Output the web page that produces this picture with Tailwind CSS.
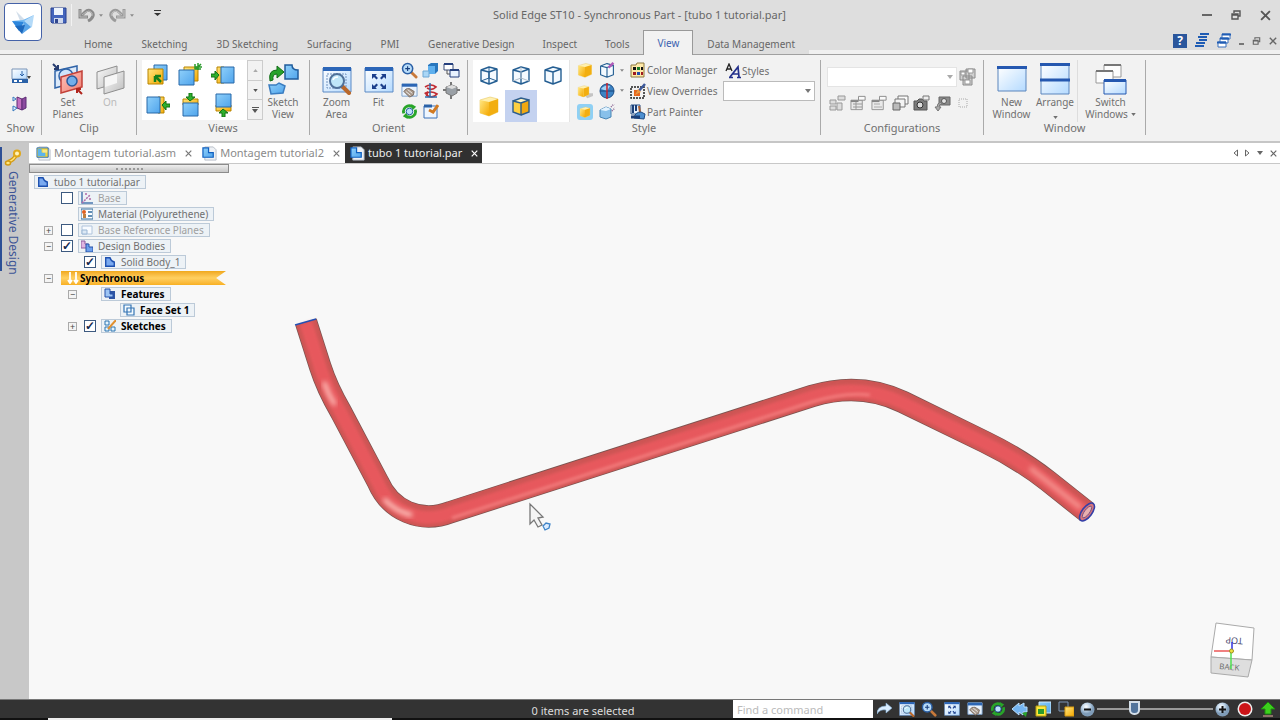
<!DOCTYPE html>
<html lang="en">
<head>
    <meta charset="UTF-8">
    <meta name="viewport" content="width=device-width, initial-scale=1.0">
    <title>Solid Edge ST10 - Synchronous Part - [tubo 1 tutorial.par]</title>
    <script src="https://cdn.jsdelivr.net/npm/@tailwindcss/browser@4"></script>
</head>
<body class="min-h-screen flex flex-col bg-[#f8f8f8] font-['Noto_Sans','Open_Sans',sans-serif] text-[11px] leading-3 text-[#707070] overflow-hidden">

    <!-- shared icons -->
    <svg class="absolute size-0" xmlns="http://www.w3.org/2000/svg">
        <defs>
            <linearGradient id="gBlue" x1="0" y1="0" x2="1" y2="1"><stop offset="0" stop-color="#8fd0fa"/><stop offset="1" stop-color="#4fa4ec"/></linearGradient>
            <linearGradient id="gWin" x1="0" y1="0" x2="1" y2="1"><stop offset="0" stop-color="#ffffff"/><stop offset="1" stop-color="#b4daff"/></linearGradient>
            <linearGradient id="gGold" x1="0" y1="0" x2="1" y2="1"><stop offset="0" stop-color="#ffe680"/><stop offset="1" stop-color="#f5a800"/></linearGradient>
            <linearGradient id="gRed" x1="0" y1="0" x2="1" y2="1"><stop offset="0" stop-color="#ffc4bc"/><stop offset="1" stop-color="#f08074"/></linearGradient>
            <linearGradient id="gGray" x1="0" y1="0" x2="1" y2="1"><stop offset="0" stop-color="#fafafa"/><stop offset="1" stop-color="#bdbdbd"/></linearGradient>
            <radialGradient id="gBall" cx=".4" cy=".3"><stop offset="0" stop-color="#fff"/><stop offset=".5" stop-color="#c4d8ea"/><stop offset="1" stop-color="#7f9cb8"/></radialGradient>
        </defs>
        <symbol id="part" viewBox="0 0 16 16"><path d="M3 1h9l3 3v11H3z" fill="#eef1f5" stroke="#b5bcc6"/><path d="M1 2h6v5h5v5H1z" fill="url(#gBlue)" stroke="#1060c0" stroke-width="1.3"/></symbol>
        <symbol id="asm" viewBox="0 0 16 16"><path d="M3 1h9l3 3v11H3z" fill="#eef1f5" stroke="#b5bcc6"/><path d="M1 2h12v10H1z" fill="#f2d43a" stroke="#2a6cb4"/><path d="M2 3h4v4h4v4H2z" fill="#5cb4ec"/><path d="M7 4h5v3H7z" fill="#f8e88a"/></symbol>
        <symbol id="body" viewBox="0 0 14 14"><path d="M2 2h5q1 4 5 5v5H2z" fill="#7aaaf0" stroke="#1c50b0" stroke-width="1.6"/></symbol>
        <symbol id="wirecube" viewBox="0 0 20 20"><path d="M2 5v11l8 3 8-3V4l-8-2z" fill="#f4faff"/><path d="M2 5v11l8 3V7zM10 7l8-3v12l-8 3M2 5l8-3 8 2" fill="none" stroke="#245e92" stroke-width="1.4" stroke-linejoin="round"/></symbol>
        <symbol id="goldcube" viewBox="0 0 22 22"><path d="m2 5 10-3 8 2v13l-9 4-9-3z" fill="#fff0b0" stroke="#e8c860" stroke-width=".6"/><path d="m2 5 9 2v14l-9-3z" fill="url(#gGold)"/><path d="m11 7 9-3v13l-9 4z" fill="#f2ae10"/></symbol>
        <symbol id="lens" viewBox="0 0 18 18"><path d="m10 10 6 6" stroke="#c8793a" stroke-width="3" stroke-linecap="round"/><circle cx="7" cy="7" r="5.4" fill="#b7dbf8" stroke="#2a5fa5" stroke-width="1.6"/><path d="M4.500 7h5M7 4.500v5" stroke="#163d7c" stroke-width="1.200"/></symbol>
        <symbol id="handwin" viewBox="0 0 18 16"><path d="M1 1h16v13H1z" fill="#eaf3fd" stroke="#7aa0cc"/><path d="M1 1h16v3H1z" fill="#2c66b4"/><path d="M3 9q2-4 6-3l5 3-1 4-4 2-2-2z" fill="#a8988a" stroke="#6b5c50" stroke-width=".8"/><path d="m5 9 5 4M7 7l5 4" stroke="#eee"/></symbol>
        <symbol id="fit" viewBox="0 0 30 30"><path d="M1 3h28v24H1z" fill="url(#gWin)" stroke="#5b89c4"/><path d="M1 2h28v4H1z" fill="#2c66b8"/><path d="M8 9h5l-1.500 1.500 2.500 2.500-1.500 1.500-2.500-2.500L8 14zM22 9h-5l1.500 1.500-2.500 2.500 1.500 1.500 2.500-2.500L22 14zM8 24h5l-1.500-1.500 2.500-2.500-1.500-1.500-2.500 2.500L8 19zM22 24h-5l1.500-1.500-2.500-2.500 1.500-1.500 2.500 2.500L22 19z" fill="#1b3f8c"/></symbol>
        <symbol id="zoomarea" viewBox="0 0 30 30"><path d="M1 3h28v24H1z" fill="url(#gWin)" stroke="#5b89c4"/><path d="M1 2h28v4H1z" fill="#2c66b8"/><path d="M5 9h19v14H5z" fill="none" stroke="#7393be" stroke-dasharray="2 1"/><path d="m20 21 7 7" stroke="#b9682c" stroke-width="4" stroke-linecap="round"/><circle cx="15" cy="16" r="7" fill="#bfe6f8" stroke="#50719a" stroke-width="2"/><path d="M11 15q1-3 5-3" fill="none" stroke="#fff" stroke-width="1.500"/></symbol>
        <symbol id="rotate" viewBox="0 0 18 18"><path d="M3 11A6 6 0 0 1 12 4" fill="none" stroke="#28a52a" stroke-width="3"/><path d="m11 1 5 3-4 4z" fill="#28a52a"/><path d="M15 7a6 6 0 0 1-9 7" fill="none" stroke="#28a52a" stroke-width="3"/><path d="m7 17-5-3 4-4z" fill="#28a52a"/><circle cx="9" cy="9" r="3.500" fill="#bfe0fa" stroke="#1d5c9c"/></symbol>
        <symbol id="cfg" viewBox="0 0 18 16"><path d="M1 5h12v10H1z" fill="#e9e9e9" stroke="#949494"/><path d="M9 1h7v4H9z" fill="#fafafa" stroke="#8a8a8a"/><path d="M1 6h8" stroke="#858585" stroke-width="2"/></symbol>
        <symbol id="restore" viewBox="0 0 10 10"><path d="M3 3V1h6v5H7" fill="none" stroke="currentColor" stroke-width="1.400"/><path d="M1 4h6v5H1zM1 5h6" fill="none" stroke="currentColor" stroke-width="1.400"/></symbol>
        <symbol id="close" viewBox="0 0 10 10"><path d="m1 1 8 8M9 1 1 9" fill="none" stroke="currentColor" stroke-width="1.700"/></symbol>
        <symbol id="down" viewBox="0 0 6 4"><path d="M0 0h6L3 4z" fill="currentColor"/></symbol>
    </svg>

    <!-- title bar + ribbon tabs -->
    <header class="flex h-[55px] shrink-0 bg-[#dedede] border-b border-[#a0a0a0]">
        <div class="w-[45px] shrink-0 flex flex-col justify-between">
            <button aria-label="Application menu" class="ml-1 mt-[3px] size-[38px] rounded-[4px] border border-[#4562a8] bg-white flex items-center justify-center">
                <svg class="size-[30px]" viewBox="0 0 30 30"><path d="m8 4 9 9-4 3z" fill="#d2deea"/><path d="m4 14 11-1 11-5-9 10z" fill="#72b8f2"/><path d="m4 14 12 1-5 9z" fill="#2d86dc"/><path d="m16 14 10-6-2 12-10 6z" fill="#b4daf8"/><path d="m16 14 7 6-9 7z" fill="#5aa5e8"/><path d="m7 19 7 8 3-9z" fill="#1c68bd"/></svg>
            </button>
            <div class="h-1 bg-[#f0f0f0]"></div>
        </div>
        <div class="flex-1 flex flex-col min-w-0">
            <div class="h-[31px] flex items-center">
                <div class="flex items-center w-[128px] shrink-0 text-[#8c8c8c]">
                    <button aria-label="Save" class="ml-[5px]"><svg class="size-[17px]" viewBox="0 0 17 17"><path d="M1 1h15v15H2l-1-1z" fill="#4465bd" stroke="#2a4390"/><path d="M4 1h9v7H4z" fill="#edf3fc"/><path d="M4 11h9v5H4z" fill="#cfd8ec"/><path d="M5 12h3v4H5z" fill="#30468e"/></svg></button>
                    <span class="w-px h-[22px] bg-[#f2f2f2] ml-1"></span>
                    <button aria-label="Undo" class="ml-[6px]"><svg class="w-[17px] h-4" viewBox="0 0 17 16"><path d="M2 2v8h8" fill="none" stroke="#8a8a8a" stroke-width="3"/><path d="m3 9 4-4q3-3 6-1 3 2 2 5-1 3-5 5" fill="none" stroke="#8a8a8a" stroke-width="3"/><path d="M2 3v7h7M4 8l4-3q3-2 5 0 2 1 1 4" fill="none" stroke="#b8b8b8"/></svg></button>
                    <svg class="w-1 h-[3px] ml-1"><use href="#down"/></svg>
                    <button aria-label="Redo" class="ml-[6px]"><svg class="w-[17px] h-4" viewBox="0 0 17 16"><path d="M15 2v8H7" fill="none" stroke="#9a9a9a" stroke-width="3"/><path d="m14 9-4-4Q7 2 4 4 1 6 2 9q1 3 5 5" fill="none" stroke="#9a9a9a" stroke-width="3"/><path d="M15 3v7H8M13 8 9 5Q6 3 4 5 2 6 3 9" fill="none" stroke="#c4c4c4"/></svg></button>
                    <svg class="w-1 h-[3px] ml-1"><use href="#down"/></svg>
                    <button aria-label="Customize" class="ml-5 mb-1 text-[#333]"><svg class="w-[7px] h-[6px]" viewBox="0 0 7 6"><path d="M0 0h7v1H0zM0 3h7L3.500 6z" fill="currentColor"/></svg></button>
                </div>
                <h1 class="flex-1 text-center pl-5 pr-[116px] pr-[114px] text-[11px] text-[#666]">Solid Edge ST10 - Synchronous Part - [tubo 1 tutorial.par]</h1>
                <div class="w-[78px] flex justify-between items-center pr-[9px] text-[#555]">
                    <button aria-label="Minimize" class="w-[10px] h-[2px] bg-[#666]"></button>
                    <button aria-label="Restore"><svg class="size-[10px]"><use href="#restore"/></svg></button>
                    <button aria-label="Close"><svg class="size-[11px]"><use href="#close"/></svg></button>
                </div>
            </div>
            <div class="h-6 flex">
                <div class="w-[25px] h-1 self-end bg-[#f0f0f0] shrink-0"></div>
                <nav class="flex items-stretch text-[10px] text-[#666] whitespace-nowrap">
                    <button class="pt-[3px] pl-[14px] pr-[15px]">Home</button>
                    <button class="pt-[3px] pl-[14px] pr-[15px]">Sketching</button>
                    <button class="pt-[3px] pl-[14px] pr-[15px]">3D Sketching</button>
                    <button class="pt-[3px] pl-[14px] pr-[15px]">Surfacing</button>
                    <button class="pt-[3px] pl-[14px] pr-[15px]">PMI</button>
                    <button class="pt-[3px] px-[14px]">Generative Design</button>
                    <button class="pt-[3px] px-[14px]">Inspect</button>
                    <button class="pt-[3px] px-[14px]">Tools</button>
                    <button class="px-[13px] -mb-px bg-[#f2f2f2] border border-b-0 border-[#999] text-[#3c62b0]">View</button>
                    <button class="pt-[3px] px-[14px]">Data Management</button>
                </nav>
                <div class="flex-1 flex flex-col justify-between">
                    <div class="flex justify-end items-center gap-2 pr-[3px] pt-[3px] text-[#666]">
                        <button aria-label="Help" class="size-[14px] bg-[#2a569c] text-white text-[12px] font-bold">?</button>
                        <button aria-label="Tile windows"><svg class="w-[14px] h-[15px]" viewBox="0 0 14 15"><path d="M5 1h9M3 4h9M4 7h8M1 10h9M0 13h9" stroke="#1f5cb4" stroke-width="2"/></svg></button>
                        <button aria-label="Cascade windows"><svg class="w-[14px] h-[15px]" viewBox="0 0 14 15"><path d="M5 1h8v5H5zM3 5h8v5H3zM1 9h8v5H1z" fill="#fff" stroke="#3b70bd"/><path d="M5 1.500h9M3 5.500h9M0 9.500h9" stroke="#1f5cb4" stroke-width="2"/></svg></button>
                        <button aria-label="Minimize document" class="w-[5px] h-[2px] mt-[6px] bg-[#777]"></button>
                        <button aria-label="Restore document"><svg class="w-[9px] h-2"><use href="#restore"/></svg></button>
                        <button aria-label="Close document"><svg class="size-2"><use href="#close"/></svg></button>
                    </div>
                    <div class="h-1 bg-[#f0f0f0]"></div>
                </div>
            </div>
        </div>
    </header>

    <!-- ribbon -->
    <section class="flex h-[88px] shrink-0 pt-[5px] bg-[#f2f2f2] border-b-2 border-[#c6c6c6] text-[10px] whitespace-nowrap">
        <div class="w-[42px] flex flex-col items-center border-r border-[#aaa] h-[75px]">
            <div class="h-[62px] flex flex-col gap-3 pt-2">
                <button aria-label="Show panes"><svg class="w-5 h-4" viewBox="0 0 20 16"><path d="M1 1h15v10H1z" fill="url(#gWin)" stroke="#7b95b8"/><path d="M1 11h16v4H1z" fill="#2b62a8"/><path d="M3 12h3v2H3zM8 12h3v2H8z" fill="#fff"/><path d="M11 3v5M9 6l2 2 2-2" stroke="#2b62a8" fill="none"/><path d="M16 8h4l-2 3z" fill="#444"/></svg></button>
                <button aria-label="Show planes"><svg class="w-5 h-4" viewBox="0 0 20 16"><path d="m6 1 5 2v11l-5-2z" fill="#c46fc0" stroke="#5c2c74"/><path d="m11 3 4-2v11l-4 2z" fill="#8c4aa0" stroke="#5c2c74"/><path d="m2 1 3 2-3 2zM2 10l4 2-4 3z" fill="#eaf3ff" stroke="#3679bd"/></svg></button>
            </div>
            <span class="text-[11px]">Show</span>
        </div>
        <div class="w-[95px] flex flex-col items-center border-r border-[#aaa] h-[75px]">
            <div class="h-[62px] flex gap-2">
                <button class="w-[34px] flex flex-col items-center">
                    <svg class="size-8 mt-[3px] mb-px shrink-0" viewBox="0 0 32 32"><path d="m3 8 22-5v16L3 25z" fill="#dceafa" stroke="#3064a8" stroke-width="1.500"/><circle cx="14" cy="13" r="7" fill="#cfe4fa" stroke="#3064a8" stroke-width="1.500"/><path d="m9 14 21-6v16L9 30z" fill="url(#gRed)" stroke="#c24038" stroke-width="1.500"/><circle cx="20" cy="18" r="5" fill="#72aeea" stroke="#2a5a9c" stroke-width="1.500"/><path d="m1 1 5 5M6 2v4H2" stroke="#263c70" stroke-width="2" fill="none"/><path d="m30 31-5-5M25 30v-4h4" stroke="#b0241c" stroke-width="2" fill="none"/></svg>
                    Set<br>Planes
                </button>
                <button class="w-[34px] flex flex-col items-center text-[#bbb]">
                    <svg class="size-8 mt-[3px] mb-px shrink-0" viewBox="0 0 32 32"><path d="m3 9 20-6v17L3 26z" fill="url(#gGray)" stroke="#8e8e8e"/><path d="m10 14 20-6v17l-20 6z" fill="url(#gGray)" stroke="#8e8e8e"/><path d="m11 15 12-4v9l-12 4z" fill="#f6f6f6"/></svg>
                    On
                </button>
            </div>
            <span class="text-[11px]">Clip</span>
        </div>
        <div class="w-[173px] flex flex-col items-center border-r border-[#aaa] h-[75px]">
            <div class="h-[62px] w-full flex pl-[5px]">
                <div class="grid grid-cols-3 w-[105px] h-[60px] pr-2 bg-white place-items-center">
                    <button aria-label="Front view"><svg class="size-6" viewBox="0 0 24 24"><path d="M8 2h13v15H8z" fill="url(#gBlue)" stroke="#2868a8"/><path d="M2 6h15v15H2z" fill="url(#gGold)" stroke="#b88400"/><path d="M9 13h6M9 13v6M9 13l6 6" stroke="#14801c" stroke-width="2.500"/></svg></button>
                    <button aria-label="Back view"><svg class="size-6" viewBox="0 0 24 24"><path d="M6 4h14v14H6z" fill="url(#gGold)" stroke="#b88400"/><path d="M1 7h15v15H1z" fill="url(#gBlue)" stroke="#2868a8"/><path d="m23 1-5 5M17 1v5h6M20 0v7M24 4h-7" stroke="#2a9a2c" stroke-width="1.500" fill="none"/></svg></button>
                    <button aria-label="Left view"><svg class="size-6" viewBox="0 0 24 24"><path d="M6 4h7v16H6z" fill="url(#gGold)" stroke="#b88400"/><path d="M10 4h13v16H10z" fill="url(#gBlue)" stroke="#2868a8"/><path d="m8 12-4-4v3H0v3h4v3z" fill="#2eb02c" stroke="#137214"/></svg></button>
                    <button aria-label="Right view"><svg class="size-6" viewBox="0 0 24 24"><path d="M12 4h6v16h-6z" fill="url(#gGold)" stroke="#b88400"/><path d="M1 4h13v16H1z" fill="url(#gBlue)" stroke="#2868a8"/><path d="m16 12 4-4v3h4v3h-4v3z" fill="#2eb02c" stroke="#137214"/></svg></button>
                    <button aria-label="Top view"><svg class="size-6" viewBox="0 0 24 24"><path d="M5 6h15v6H5z" fill="url(#gGold)" stroke="#b88400"/><path d="M5 10h15v13H5z" fill="url(#gBlue)" stroke="#2868a8"/><path d="m12 8-4-4h3V0h3v4h3z" fill="#2eb02c" stroke="#137214"/></svg></button>
                    <button aria-label="Bottom view"><svg class="size-6" viewBox="0 0 24 24"><path d="M5 12h15v6H5z" fill="url(#gGold)" stroke="#b88400"/><path d="M5 1h15v13H5z" fill="url(#gBlue)" stroke="#2868a8"/><path d="m12 16-4 4h3v4h3v-4h3z" fill="#2eb02c" stroke="#137214"/></svg></button>
                </div>
                <div class="flex flex-col w-4 h-[60px] border border-[#ccc] divide-y divide-[#ccc] text-[#555]">
                    <button aria-label="Scroll up" class="flex-1 flex items-center justify-center text-[#aaa]"><svg class="w-[5px] h-[3px] rotate-180"><use href="#down"/></svg></button>
                    <button aria-label="Scroll down" class="flex-1 flex items-center justify-center"><svg class="w-[5px] h-[3px]"><use href="#down"/></svg></button>
                    <button aria-label="More views" class="flex-1 flex flex-col items-center justify-center gap-px"><span class="w-[7px] h-px bg-[#555]"></span><svg class="w-[6px] h-1"><use href="#down"/></svg></button>
                </div>
                <button class="w-10 flex flex-col items-center">
                    <svg class="size-8 mt-[3px] mb-px shrink-0" viewBox="0 0 32 32"><path d="M18 2h7q0 5 6 5v9H18z" fill="url(#gBlue)" stroke="#205c9c" stroke-width="1.500"/><path d="M2 22h7l3-2 6 3-2 7-12 1z" fill="url(#gBlue)" stroke="#3b7dc0" stroke-width="1.500"/><path d="M3 18Q1 7 10 7V3l7 6-7 6v-4q-5 0-4 6z" fill="#27a32b" stroke="#126b18"/></svg>
                    Sketch<br>View
                </button>
            </div>
            <span class="text-[11px]">Views</span>
        </div>
        <div class="w-[158px] flex flex-col items-center border-r border-[#aaa] h-[75px]">
            <div class="h-[62px] flex">
                <button class="w-[42px] flex flex-col items-center"><svg class="size-[30px] mt-[5px] mb-px shrink-0"><use href="#zoomarea"/></svg>Zoom<br>Area</button>
                <button class="w-[42px] flex flex-col items-center"><svg class="size-[30px] mt-[5px] mb-px shrink-0"><use href="#fit"/></svg>Fit</button>
                <div class="grid grid-cols-3 w-[62px] place-items-center">
                    <button aria-label="Zoom"><svg class="size-[17px]"><use href="#lens"/></svg></button>
                    <button aria-label="Zoom tool"><svg class="size-[17px]" viewBox="0 0 17 17"><path d="m6 3 3-2h7v8l-3 3H6z" fill="#2876bd"/><path d="M6 4h7v8H6z" fill="#5fb0ee"/><path d="M1 9h6v6H1z" fill="#a9d6f6" stroke="#6ea7d4"/></svg></button>
                    <button aria-label="Previous view"><svg class="size-[17px]" viewBox="0 0 17 17"><path d="M1 2h9v6H1z" fill="#fff" stroke="#3c4e78"/><path d="M7 8h9v7H7z" fill="#e8f2ff" stroke="#26407e"/><path d="M1 2h9M7 8h9" stroke="#26407e" stroke-width="2"/><path d="M4 8v4h3" fill="none" stroke="#555"/></svg></button>
                    <button aria-label="Pan"><svg class="size-[17px]"><use href="#handwin"/></svg></button>
                    <button aria-label="Spin about"><svg class="size-[17px]" viewBox="0 0 17 17"><path d="M3 5q6-4 11 0-4 4-9 1M3 12q6-4 12 0-4 5-11 1" fill="none" stroke="#c02c34" stroke-width="1.700"/><path d="M8 1v14M3 15h12" stroke="#2f6fae" stroke-width="1.500"/><path d="m2 11 4-2v5z" fill="#c02c34"/></svg></button>
                    <button aria-label="View orientation"><svg class="size-[17px]" viewBox="0 0 17 17"><path d="M8 0v17M0 8h17" stroke="#777" stroke-width="2"/><path d="m3 5 6-2 5 2v6l-5 3-6-3z" fill="#9aa0a6" stroke="#777"/><path d="m3 5 6 2 5-2-5-2z" fill="#ddd"/></svg></button>
                    <button aria-label="Rotate"><svg class="size-[17px]"><use href="#rotate"/></svg></button>
                    <button aria-label="Refresh view"><svg class="size-[17px]" viewBox="0 0 17 17"><path d="M2 3h13v12H2z" fill="#eef6ff" stroke="#3b71b8"/><path d="M2 3h8" stroke="#2b62a8" stroke-width="3"/><path d="m7 7 4 2 5-7" fill="none" stroke="#d17a22" stroke-width="3"/></svg></button>
                </div>
            </div>
            <span class="text-[11px]">Orient</span>
        </div>
        <div class="w-[353px] flex flex-col items-center border-r border-[#aaa] h-[75px]">
            <div class="h-[62px] w-full flex pl-[5px]">
                <div class="grid grid-cols-3 w-[97px] h-[62px] bg-white border-r border-[#e4e4e4]">
                    <button aria-label="Wire frame" class="flex items-center justify-center"><svg class="size-5" viewBox="0 0 20 20"><use href="#wirecube"/><path d="M10 2v11l-8 3M10 13l8 3" fill="none" stroke="#245e92"/></svg></button>
                    <button aria-label="Hidden edges" class="flex items-center justify-center"><svg class="size-5" viewBox="0 0 20 20"><use href="#wirecube"/><path d="M10 2v11l-8 3M10 13l8 3" fill="none" stroke="#b0bdca"/></svg></button>
                    <button aria-label="Visible edges" class="flex items-center justify-center"><svg class="size-5"><use href="#wirecube"/></svg></button>
                    <button aria-label="Shaded" class="flex items-center justify-center"><svg class="size-[22px]"><use href="#goldcube"/></svg></button>
                    <button aria-label="Shaded with edges" class="flex items-center justify-center bg-[#c4d2f0]"><svg class="size-5" viewBox="0 0 20 20"><path d="m2 5 8-3 8 2-8 3z" fill="#fff3c0"/><path d="m2 5 8 2v12l-8-3z" fill="#ffd040"/><path d="m10 7 8-3v12l-8 3z" fill="#f2a810"/><path d="M2 5v11l8 3V7zM10 7l8-3v12l-8 3M2 5l8-3 8 2" fill="none" stroke="#2c5d8c" stroke-width="1.400"/></svg></button>
                </div>
                <div class="grid grid-rows-3 w-[29px] h-[62px] place-items-center">
                    <button aria-label="Drop shadow"><svg class="size-4"><use href="#goldcube"/></svg></button>
                    <button aria-label="Floor shadow"><svg class="size-4" viewBox="0 0 22 22"><path d="M9 14h13v4l-8 3z" fill="#c4c4c4"/><use href="#goldcube" width="18" height="18" y="2"/></svg></button>
                    <button aria-label="Ambient shadow" class="size-4 rounded-[3px] bg-[#8fd0f4] flex items-center justify-center"><svg class="size-3"><use href="#goldcube"/></svg></button>
                </div>
                <div class="grid grid-rows-3 w-[25px] h-[62px] items-center text-[#888]">
                    <div class="flex items-center gap-[5px]"><button aria-label="Edge style"><svg class="size-4" viewBox="0 0 20 20"><use href="#wirecube"/><path d="m12 7 6-6" stroke="#b05ab8" stroke-width="3"/></svg></button><svg class="w-1 h-[3px]"><use href="#down"/></svg></div>
                    <div class="flex items-center gap-[5px]"><button aria-label="Reflection"><svg class="size-4" viewBox="0 0 16 16"><circle cx="8" cy="8" r="7" fill="#3c83c4" stroke="#1d4e86"/><path d="M2 6q4-5 9-3L8 8z" fill="#a5d2f4"/><path d="M1 8h14" stroke="#174478"/><path d="M8 0v16" stroke="#c8202c" stroke-width="1.500"/></svg></button><svg class="w-1 h-[3px]"><use href="#down"/></svg></div>
                    <button aria-label="Perspective"><svg class="size-4" viewBox="0 0 16 16"><path d="m1 6 6-3 5 2v8l-5 2-6-2z" fill="#88c0ea" stroke="#4784b4"/><path d="m1 6 6 1 5-2-5-2z" fill="#e2f3ff"/><path d="m12 3 3-3M13 7l3-3" stroke="#8a6494" stroke-dasharray="1 1" stroke-width="1.500"/></svg></button>
                </div>
                <div class="grid grid-rows-3 h-[62px] items-center w-[99px] pl-[6px]">
                    <button class="flex items-center gap-px"><svg class="size-4" viewBox="0 0 16 16"><path d="M1 3h5l1-2h7v14H1z" fill="#ffe9a8" stroke="#8c7840"/><path d="M3 5h3v3H3z" fill="#111"/><path d="M7 5h3v3H7z" fill="#1a7a28"/><path d="M11 5h2v3h-2z" fill="#111"/><path d="M3 10h3v3H3z" fill="#a01820"/><path d="M7 10h3v3H7z" fill="#204cac"/><path d="M11 10h2v3h-2z" fill="#a01820"/></svg>Color Manager</button>
                    <button class="flex items-center gap-px"><svg class="size-4" viewBox="0 0 16 16"><path d="M1 4h13v11H1z" fill="none" stroke="#222" stroke-dasharray="2 1" stroke-width="1.500"/><path d="M4 7h6v6H4z" fill="#e8671c"/><path d="m7 10 8-9" stroke="#3d5a9c" stroke-width="2.500"/><path d="m5 12 3-6 3 3z" fill="#f2983c"/></svg>View Overrides</button>
                    <button class="flex items-center gap-px"><svg class="size-4" viewBox="0 0 16 16"><path d="M1 1h9v9H1z" fill="#e8f2fc" stroke="#2b5288"/><path d="M3 1v8M6 1v6" stroke="#1b3f78" stroke-width="2"/><path d="m9 2 1 6" stroke="#ad6030" stroke-width="2"/><path d="M4 14q1-6 7-6l4 2-1 5z" fill="#4d8fd0" stroke="#1e4c84"/><path d="M1 13h9" stroke="#1b3f78" stroke-width="3"/></svg>Part Painter</button>
                </div>
                <div class="flex flex-col gap-px w-[92px] pt-[2px]">
                    <button class="flex items-center gap-px h-[18px] pl-[2px]"><svg class="size-4 shrink-0" viewBox="0 0 16 16"><path d="M1 8 4 1l3 7M2 6h4" fill="none" stroke="#222" stroke-width="1.300"/><path d="M5 14 13 4l1 10M8 11h6M4 14.500h4M12 14.500h4" fill="none" stroke="#23308c" stroke-width="1.700"/></svg>Styles</button>
                    <div class="relative">
                        <select aria-label="Style override" class="block appearance-none w-full h-5 bg-white border border-[#bbb] outline-none"><option></option></select>
                        <svg class="absolute right-1 top-2 w-[6px] h-1 text-[#777] pointer-events-none"><use href="#down"/></svg>
                    </div>
                </div>
            </div>
            <span class="text-[11px]">Style</span>
        </div>
        <div class="w-[163px] flex flex-col items-center border-r border-[#aaa] h-[75px]">
            <div class="h-[62px] w-full flex flex-col pl-[6px] pt-[7px] gap-2">
                <div class="flex items-center gap-[2px]">
                    <div class="relative w-[130px]">
                        <select aria-label="Configuration" disabled class="block appearance-none w-full h-5 bg-white border border-[#e4e4e4] outline-none"><option></option></select>
                        <svg class="absolute right-1 top-2 w-[6px] h-1 text-[#aaa] pointer-events-none"><use href="#down"/></svg>
                    </div>
                    <button aria-label="Save configuration"><svg class="w-[17px] h-[18px]" viewBox="0 0 17 18"><path d="M1 3h9v9H1zM7 1h9v9H7zM4 8h9v9H4z" fill="#d0d0d0" stroke="#8a8a8a"/><path d="M9 1h5v4H9zM2 4h4v3H2zM6 12h5v4H6z" fill="#fff" stroke="#999"/></svg></button>
                </div>
                <div class="flex items-center gap-[4px] pl-[2px]">
                    <svg class="w-[17px] h-4" viewBox="0 0 17 16"><path d="M1 5h6v4H1zM1 11h6v4H1zM8 8h5v7H8zM9 1h7v4H9z" fill="#ddd" stroke="#999"/></svg>
                    <svg class="w-[17px] h-4" viewBox="0 0 17 16"><use href="#cfg"/><path d="M3 9h9M3 12h9M6 7v8" stroke="#999"/></svg>
                    <svg class="w-[17px] h-4" viewBox="0 0 17 16"><use href="#cfg"/><path d="M3 9h6M3 12h8" stroke="#aaa"/></svg>
                    <svg class="w-[17px] h-4" viewBox="0 0 17 16"><path d="M6 1h10v8H6z" fill="#fafafa" stroke="#777"/><path d="M3 4h10v8H3z" fill="#f4f4f4" stroke="#777"/><path d="M1 8h7v7H1z" fill="#bbb" stroke="#666"/></svg>
                    <svg class="w-[17px] h-4" viewBox="0 0 17 16"><path d="M1 6h3l2-2h3l2 2h3v9H1z" fill="#7c7c7c" stroke="#555"/><circle cx="7" cy="10" r="3" fill="#ddd" stroke="#333"/><path d="M10 1h6v4h-6z" fill="#eee" stroke="#777"/></svg>
                    <svg class="w-[17px] h-4" viewBox="0 0 17 16"><path d="M5 2h11v8H5z" fill="#8b8b8b" stroke="#666"/><circle cx="10" cy="6" r="2.500" fill="#e4e4e4" stroke="#555"/><path d="M8 9q-3 0-3 3h2l-3 4-3-4h2q0-4 4-5z" fill="#aaa" stroke="#777"/></svg>
                    <svg class="w-[17px] h-4" viewBox="0 0 17 16"><path d="M4 4h8v8H4z" fill="none" stroke="#aaa" stroke-dasharray="1 1"/></svg>
                </div>
            </div>
            <span class="text-[11px]">Configurations</span>
        </div>
        <div class="w-[162px] flex flex-col items-center border-r border-[#aaa] h-[75px]">
            <div class="h-[62px] w-full flex pl-[6px]">
                <button class="w-[43px] flex flex-col items-center"><svg class="w-[30px] h-8 mt-[3px] mb-px shrink-0" viewBox="0 0 30 32"><path d="M1 4h28v24H1z" fill="url(#gWin)" stroke="#5b85bc"/><path d="M0 4.500h30" stroke="#2558b0" stroke-width="3"/></svg>New<br>Window</button>
                <button class="w-[45px] flex flex-col items-center border-r border-[#ddd]"><svg class="w-[30px] h-8 mt-[3px] mb-px shrink-0" viewBox="0 0 30 32"><path d="M1 1h28v30H1z" fill="url(#gWin)" stroke="#5b85bc"/><path d="M0 1.500h30M0 17h30" stroke="#2558b0" stroke-width="3"/></svg>Arrange<svg class="w-[5px] h-[3px] mt-2"><use href="#down"/></svg></button>
                <button class="w-[65px] flex flex-col items-center"><svg class="w-8 h-8 mt-[3px] mb-px shrink-0" viewBox="0 0 32 32"><path d="M9 2h17v12H9z" fill="#fdfdfd" stroke="#999"/><path d="M9 2h17" stroke="#777" stroke-width="2"/><path d="M1 8h17v12H1z" fill="#fdfdfd" stroke="#999"/><path d="M1 8h17" stroke="#777" stroke-width="2"/><path d="M9 17h22v14H9z" fill="url(#gWin)" stroke="#2558b0"/><path d="M9 17.500h22" stroke="#2558b0" stroke-width="3"/></svg>Switch<span class="flex items-center gap-[3px]">Windows <svg class="w-[5px] h-[3px]"><use href="#down"/></svg></span></button>
            </div>
            <span class="text-[11px]">Window</span>
        </div>
    </section>

    <div class="flex flex-1 min-h-0">
        <!-- docked pane tab -->
        <aside class="w-[29px] shrink-0 bg-[#c8c8c8] pt-1">
            <button class="h-[124px] w-6 flex flex-col items-center gap-1 pt-[2px] border-l-2 border-[#2d4f96] text-[12px] leading-6 text-[#3c5496]">
                <svg class="size-[18px] shrink-0" viewBox="0 0 18 18"><path d="M4 13q6-2 8-7" fill="none" stroke="#d39a12" stroke-width="4"/><path d="M4 13q6-2 8-7" fill="none" stroke="#ffe27a" stroke-width="1.500"/><circle cx="13" cy="4.500" r="3" fill="#fff2b8" stroke="#e0a81a" stroke-width="2"/><ellipse cx="4" cy="14" rx="2.500" ry="2" fill="#ffe680" stroke="#d39a12" stroke-width="1.500"/></svg>
                <span class="[writing-mode:vertical-rl] whitespace-nowrap">Generative Design</span>
            </button>
        </aside>

        <div class="flex-1 flex flex-col min-w-0">
            <!-- document tabs -->
            <div class="h-[21px] shrink-0 flex items-stretch bg-white border-b border-[#c8c8c8] text-[11px] text-[#8a8a8a] whitespace-nowrap">
                <div class="flex items-center gap-[3px] pl-[7px]"><svg class="size-[15px]"><use href="#asm"/></svg><a href="#">Montagem tutorial.asm</a><button aria-label="Close tab" class="ml-[6px] text-[#777]"><svg class="size-[7px]"><use href="#close"/></svg></button></div>
                <div class="flex items-center gap-[3px] pl-[10px]"><svg class="size-[15px]"><use href="#part"/></svg><a href="#">Montagem tutorial2</a><button aria-label="Close tab" class="ml-[6px] text-[#777]"><svg class="size-[7px]"><use href="#close"/></svg></button></div>
                <div class="flex items-center gap-[3px] pl-[5px] pr-1 ml-[5px] bg-[#303030] text-[#eee]"><svg class="size-[15px]"><use href="#part"/></svg><a href="#">tubo 1 tutorial.par</a><button aria-label="Close tab" class="ml-[6px] text-white"><svg class="size-[7px]"><use href="#close"/></svg></button></div>
                <div class="ml-auto flex items-center gap-[7px] pr-[3px] text-[#666]">
                    <button aria-label="Previous tab"><svg class="w-[5px] h-2" viewBox="0 0 5 8"><path d="M4.500 1v6L1 4z" fill="none" stroke="currentColor"/></svg></button>
                    <button aria-label="Next tab"><svg class="w-[5px] h-2" viewBox="0 0 5 8"><path d="M.5 1v6L4 4z" fill="none" stroke="currentColor"/></svg></button>
                    <button aria-label="Tab list"><svg class="w-[6px] h-1"><use href="#down"/></svg></button>
                    <button aria-label="Close active tab"><svg class="size-[7px]"><use href="#close"/></svg></button>
                </div>
            </div>

            <main class="relative flex-1 min-h-0">
                <!-- model -->
                <svg class="absolute inset-0 w-full h-full" viewBox="29 164 1251 535" preserveAspectRatio="xMinYMin meet">
                    <defs>
                        <path id="tube" d="M306 322 320 366Q327 388 341 412L378 482C390 510 420 524 451 512L812 396C842 387 872 387 903 402L985 442Q1020 459 1048 481L1087 512"/>
                        <filter id="soft" x="-20%" y="-20%" width="140%" height="140%"><feGaussianBlur stdDeviation="1.600"/></filter>
                        <filter id="softer" x="-20%" y="-20%" width="140%" height="140%"><feGaussianBlur stdDeviation="2.400"/></filter>
                    </defs>
                    <g fill="none">
                        <use href="#tube" stroke="#7c5450" stroke-width="22.500"/>
                        <use href="#tube" stroke="#cd5554" stroke-width="21"/>
                        <use href="#tube" stroke="#e7595d" stroke-width="13" y="1" filter="url(#soft)"/>
                        <path d="M452 518 812 402C835 395 855 393 870 395" stroke="#f27b7c" stroke-width="3" filter="url(#soft)"/>
                        <path d="M324 382Q328 394 335 405" stroke="#ffc4be" stroke-width="4" filter="url(#softer)"/>
                        <path d="M384 499Q396 512 412 515" stroke="#ffd0c8" stroke-width="4" filter="url(#softer)"/>
                        <path d="M1030 468 1081 508" stroke="#f8a09a" stroke-width="4" filter="url(#softer)"/>
                    </g>
                    <path d="m295 325 21-6" stroke="#2450b4" stroke-width="1.500"/>
                    <ellipse cx="1087" cy="512" rx="10.500" ry="5" transform="rotate(-53 1087 512)" fill="#d8767c" stroke="#3440a8" stroke-width="1.600"/>
                    <ellipse cx="1087" cy="512" rx="7" ry="2.500" transform="rotate(-53 1087 512)" fill="#e8b0b0" stroke="#6a4a80" stroke-width=".8"/>
                    <!-- pointer -->
                    <path d="M530 504v20l4-4 4 7 4-2-4-7 5-1z" fill="#f4f4f4" stroke="#777" stroke-width="1.300"/>
                    <path d="m543 526 3-3 4 1-1 4-4 2z" fill="#dcecff" stroke="#3f84c8" stroke-width="1.300"/>
                    <!-- view cube -->
                    <path d="m1216 623 38 5-2 32-41-3z" fill="#fff" stroke="#aaa"/>
                    <path d="m1211 657 41 3-4 17-37-4z" fill="#dedede" stroke="#aaa"/>
                    <text transform="translate(1243 638) rotate(184)" font-size="9" fill="#4c4c70">TOP</text>
                    <text transform="translate(1219 669) rotate(5)" font-size="8" fill="#707070">BACK</text>
                    <path d="M1231 651h-17" stroke="#f08080" stroke-width="2"/>
                    <path d="M1231 651v18" stroke="#50e050" stroke-width="1.500"/>
                    <path d="M1232 651v-9" stroke="#3030e0" stroke-width="1.500"/>
                    <circle cx="1231.500" cy="651" r="2" fill="#f0e040" stroke="#a09020"/>
                </svg>

                <!-- pathfinder -->
                <div class="relative w-[200px] text-[10px] leading-3 whitespace-nowrap">
                    <div class="h-[9px] border border-[#8c8c8c] bg-linear-to-b from-[#eee] to-[#c8c8c8] flex items-center justify-center"><span class="w-[27px] border-t-2 border-dotted border-[#999]"></span></div>
                    <ul class="pt-px">
                        <li class="h-4 flex items-center pl-[5px]"><span class="flex items-center gap-[5px] h-[14px] border border-[#bccad8] bg-[#edf2f6] px-[2px] pr-[5px]"><svg class="size-3"><use href="#body"/></svg>tubo 1 tutorial.par</span></li>
                        <li class="h-4 flex items-center pl-8 text-[#a0a0a0]"><input type="checkbox" aria-label="Base" class="appearance-none size-3 bg-white border border-[#3d5a80] mr-[5px]"><span class="flex items-center gap-[5px] h-[14px] border border-[#bccad8] bg-[#edf2f6] px-[2px] pr-[5px]"><svg class="size-3" viewBox="0 0 12 12"><path d="M1 0v11h11" fill="none" stroke="#4a78b0" stroke-width="1.500"/><path d="m1 11 8-8M4 2h3M8 7h3" stroke="#b06aa8" stroke-width="1.500" stroke-dasharray="2 1"/></svg>Base</span></li>
                        <li class="h-4 flex items-center pl-[49px]"><span class="flex items-center gap-[5px] h-[14px] border border-[#bccad8] bg-[#edf2f6] px-[2px] pr-[5px]"><svg class="size-3" viewBox="0 0 12 12"><path d="M0 1h12v10H0z" fill="#fff" stroke="#2e6a9c"/><circle cx="3" cy="4" r="2" fill="#e06020"/><path d="M2 6h3v4H2z" fill="#c08040"/><path d="M7 4h4M7 8h4" stroke="#2e6a9c" stroke-width="1.500"/></svg>Material (Polyurethene)</span></li>
                        <li class="h-4 flex items-center pl-[15px] text-[#a0a0a0]"><button aria-label="Expand" class="size-[9px] border border-[#aaa] bg-[#f4f4f4] text-[#444] text-[9px] leading-[7px] mr-2">+</button><input type="checkbox" aria-label="Base Reference Planes" class="appearance-none size-3 bg-white border border-[#3d5a80] mr-[5px]"><span class="flex items-center gap-[5px] h-[14px] border border-[#bccad8] bg-[#edf2f6] px-[2px] pr-[5px]"><svg class="size-3" viewBox="0 0 12 12"><path d="M1 2h10v8H1z" fill="#f8fbff" stroke="#b0c4dc"/><path d="M1 6h5v4H1z" fill="#dbe8f5" stroke="#9ab6d4"/></svg>Base Reference Planes</span></li>
                        <li class="h-4 flex items-center pl-[15px]"><button aria-label="Collapse" class="size-[9px] border border-[#aaa] bg-[#f4f4f4] text-[#444] text-[9px] leading-[7px] mr-2">−</button><input type="checkbox" checked aria-label="Design Bodies" class="appearance-none size-3 bg-white border border-[#3d5a80] mr-[5px] before:content-['✓'] before:block before:text-[12px] before:leading-[10px] before:font-bold before:text-[#14284c]"><span class="flex items-center gap-[5px] h-[14px] border border-[#bccad8] bg-[#edf2f6] px-[2px] pr-[5px]"><svg class="size-3" viewBox="0 0 12 12"><path d="M0 1h4v3h3v4H0z" fill="#e0b4e0" stroke="#8c5c9c"/><path d="M5 4h3v3h4v5H5z" fill="#6ea0ec" stroke="#2450a8"/></svg>Design Bodies</span></li>
                        <li class="h-4 flex items-center pl-[55px]"><input type="checkbox" checked aria-label="Solid Body_1" class="appearance-none size-3 bg-white border border-[#3d5a80] mr-[5px] before:content-['✓'] before:block before:text-[12px] before:leading-[10px] before:font-bold before:text-[#14284c]"><span class="flex items-center gap-[5px] h-[14px] border border-[#bccad8] bg-[#edf2f6] px-[2px] pr-[5px]"><svg class="size-3"><use href="#body"/></svg>Solid Body_1</span></li>
                        <li class="h-4 flex items-center pl-[15px] text-black"><button aria-label="Collapse" class="size-[9px] border border-[#aaa] bg-[#f4f4f4] text-[#444] text-[9px] leading-[7px] mr-2">−</button><span class="flex items-center gap-px h-[14px] w-[165px] pl-[6px] font-bold bg-linear-to-b from-[#f0a818] via-[#ffd060] to-[#f8b020] [clip-path:polygon(0_0,100%_0,94%_50%,100%_100%,0_100%)]"><svg class="size-3" viewBox="0 0 12 12"><path d="M3 0v10M1 8l2 3 2-3M9 0v10M7 8l2 3 2-3" fill="none" stroke="#fff" stroke-width="1.800"/></svg>Synchronous</span></li>
                        <li class="h-4 flex items-center pl-[39px] text-black"><button aria-label="Collapse" class="size-[9px] border border-[#aaa] bg-[#f4f4f4] text-[#444] text-[9px] leading-[7px] mr-6">−</button><span class="flex items-center gap-[5px] h-[14px] border border-[#bccad8] bg-[#edf2f6] px-[2px] pr-[5px] font-bold"><svg class="size-3" viewBox="0 0 12 12"><path d="M5 3h6v8H5z" fill="#2c54a4"/><path d="M1 1h5v5h3v3H1z" fill="#9cc4f4" stroke="#2450a8"/></svg>Features</span></li>
                        <li class="h-4 flex items-center pl-[91px] text-black"><span class="flex items-center gap-[5px] h-[14px] border border-[#bccad8] bg-[#edf2f6] px-[2px] pr-[5px] font-bold"><svg class="size-3" viewBox="0 0 12 12"><path d="M1 1h7v7H1zM4 4h7v7H4z" fill="#f2faff" stroke="#3474b4" stroke-width="1.200"/></svg>Face Set 1</span></li>
                        <li class="h-4 flex items-center pl-[39px] text-black"><button aria-label="Expand" class="size-[9px] border border-[#aaa] bg-[#f4f4f4] text-[#444] text-[9px] leading-[7px] mr-[7px]">+</button><input type="checkbox" checked aria-label="Sketches" class="appearance-none size-3 bg-white border border-[#3d5a80] mr-[5px] before:content-['✓'] before:block before:text-[12px] before:leading-[10px] before:font-bold before:text-[#14284c]"><span class="flex items-center gap-[5px] h-[14px] border border-[#bccad8] bg-[#edf2f6] px-[2px] pr-[5px] font-bold"><svg class="size-3" viewBox="0 0 12 12"><path d="M1 1h4v4H1zM1 7h4v4H1zM7 7h4v4H7z" fill="#e4f4ff" stroke="#2c74b0"/><path d="m4 9 8-9" stroke="#e09030" stroke-width="2"/></svg>Sketches</span></li>
                    </ul>
                </div>
            </main>
        </div>
    </div>

    <!-- status bar -->
    <footer class="shrink-0 bg-[#333] border-t border-[#777]">
        <div class="h-[18px] flex items-center">
            <p class="flex-1 pl-[433px] pt-[3px] text-center text-[11px] text-[#ddd]">0 items are selected</p>
            <input type="text" placeholder="Find a command" aria-label="Find a command" class="w-[140px] h-[18px] bg-white pl-1 text-[11px] text-[#555] placeholder:text-[#bbb] outline-none">
            <div class="w-[407px] flex items-center justify-between pl-1 pr-1">
                <button aria-label="Run"><svg class="w-[15px] h-4" viewBox="0 0 15 16"><path d="M0 13q0-8 9-8V2l6 5-6 5V9q-6-1-9 4z" fill="#d8ecff" stroke="#84aed4" stroke-width=".6"/></svg></button>
                <button aria-label="Zoom area"><svg class="size-4"><use href="#zoomarea"/></svg></button>
                <button aria-label="Zoom"><svg class="size-4"><use href="#lens"/></svg></button>
                <button aria-label="Fit"><svg class="size-4"><use href="#fit"/></svg></button>
                <button aria-label="Pan"><svg class="size-4"><use href="#handwin"/></svg></button>
                <button aria-label="Rotate"><svg class="size-4"><use href="#rotate"/></svg></button>
                <button aria-label="Look at"><svg class="size-4" viewBox="0 0 16 16"><path d="m0 8 7-6v3l5-3v4h3v5h-4v3L7 11v3z" fill="#74b4f0" stroke="#b8dcfa"/><path d="m10 12 5-1-1 5z" fill="#2aa52a"/></svg></button>
                <button aria-label="Named views"><svg class="size-4" viewBox="0 0 16 16"><path d="M4 1h12v11H4z" fill="url(#gBlue)" stroke="#cfe8fa"/><path d="M1 5h10v10H1z" fill="#ffe83c" stroke="#b8a010"/><path d="M3 8h6v5H3z" fill="#2a9a2c"/></svg></button>
                <button aria-label="View styles"><svg class="size-4" viewBox="0 0 16 16"><path d="M1 1h9v9H1z" fill="none" stroke="#7c94b4"/><path d="M7 6h9v9H7z" fill="url(#gGold)" stroke="#d89a10"/></svg></button>
                <div class="flex items-center">
                    <button aria-label="Zoom out"><svg class="size-[15px]" viewBox="0 0 15 15"><circle cx="7.500" cy="7.500" r="7" fill="url(#gBall)"/><path d="M4 7.500h7" stroke="#111" stroke-width="2"/></svg></button>
                    <input type="range" min="0" max="100" value="30" aria-label="Zoom level" class="appearance-none w-[116px] mx-[2px] h-4 bg-transparent [&::-webkit-slider-runnable-track]:h-[2px] [&::-webkit-slider-runnable-track]:bg-[#999] [&::-webkit-slider-thumb]:appearance-none [&::-webkit-slider-thumb]:w-[11px] [&::-webkit-slider-thumb]:h-[14px] [&::-webkit-slider-thumb]:-mt-[7px] [&::-webkit-slider-thumb]:border-2 [&::-webkit-slider-thumb]:border-[#d4dee8] [&::-webkit-slider-thumb]:bg-[#52749c] [&::-webkit-slider-thumb]:rounded-b-[5px]">
                    <button aria-label="Zoom in"><svg class="size-[15px]" viewBox="0 0 15 15"><circle cx="7.500" cy="7.500" r="7" fill="url(#gBall)"/><path d="M4 7.500h7M7.500 4v7" stroke="#111" stroke-width="2"/></svg></button>
                </div>
                <button aria-label="Record"><svg class="size-4" viewBox="0 0 16 16"><circle cx="8" cy="8" r="7.500" fill="#eee"/><circle cx="8" cy="8" r="6" fill="#cc1418"/></svg></button>
                <button aria-label="Upload"><svg class="size-4" viewBox="0 0 16 16"><path d="m8 1 7 7h-4v5H5V8H1z" fill="#3cd01c" stroke="#1e8a10"/><path d="M3 15h10" stroke="#e8b0a0"/></svg></button>
            </div>
        </div>
        <div class="h-[2px] bg-[#111] pl-12"><div class="w-[344px] h-full bg-[#eee]"></div></div>
    </footer>

</body>
</html>
